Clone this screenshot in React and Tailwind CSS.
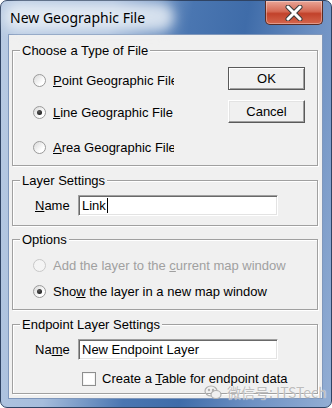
import React from 'react'

const body = { fontFamily: '"Liberation Sans", Arial, sans-serif' }

function Radio({ checked, disabled }) {
  return (
    <span
      className={`relative flex h-[13px] w-[13px] shrink-0 items-center justify-center rounded-full border ${
        disabled ? 'border-[#c8c8c8] bg-[#f4f4f4]' : 'border-[#9a9a9a] bg-[linear-gradient(135deg,#d8d8d8,#ffffff_70%)]'
      }`}
    >
      {checked && (
        <span className="h-[5px] w-[5px] rounded-full bg-[radial-gradient(circle_at_40%_35%,#5a5a5a,#0a0a0a)]" />
      )}
    </span>
  )
}

function Group({ title, className, children }) {
  return (
    <div
      className={`relative ml-[3px] w-[306px] border border-[#a0a0a0] shadow-[inset_1px_1px_0_#fff,1px_1px_0_#fff] ${className}`}
    >
      <span className="absolute left-[7px] top-[-8px] bg-[#f0f0f0] px-[2px] text-[13px] leading-[15px] text-black">
        {title}
      </span>
      {children}
    </div>
  )
}

function Button({ children, isDefault }) {
  return (
    <div
      className={`flex h-[23px] w-[77px] items-center justify-center bg-[#f0f0f0] text-[13px] text-black ${
        isDefault
          ? 'border border-[#5a5a5a] shadow-[inset_1px_1px_0_#fff,inset_-1px_-1px_0_#a0a0a0]'
          : 'border border-t-[#fff] border-l-[#fff] border-r-[#5a5a5a] border-b-[#5a5a5a] shadow-[inset_-1px_-1px_0_#a0a0a0,inset_1px_1px_0_#e3e3e3]'
      }`}
    >
      {children}
    </div>
  )
}

function TextBox({ value, cursor }) {
  return (
    <div className="flex h-[21px] w-[200px] items-center border border-t-[#a0a0a0] border-l-[#a0a0a0] border-r-[#fff] border-b-[#fff] bg-white pl-[3px] text-[13px] text-black shadow-[inset_1px_1px_0_#696969,inset_-1px_-1px_0_#e3e3e3]">
      <span className="leading-[15px]">{value}</span>
      {cursor && <span className="ml-[1px] h-[15px] w-[1px] bg-black" />}
    </div>
  )
}

export default function App() {
  return (
    <div
      className="relative flex h-[408px] w-[332px] flex-col rounded-[7px] border border-[#2f4363] bg-[linear-gradient(100deg,#b9cbe3_0%,#a6bddc_28%,#4a76b1_48%,#3f6ca9_62%,#6e91c3_80%,#93aed4_100%)] pb-[8px] pl-[7px] pr-[8px]"
      style={body}
    >
      {/* title bar */}
      <div className="relative flex h-[33px] items-start justify-between">
        <div className="absolute left-[-4px] top-[2px] h-[28px] w-[170px] rounded-full bg-[#eef2f8]/80 blur-[6px]" />
        <span
          className="relative ml-[2px] mt-[7px] text-[14px] leading-[19px] text-black"
          style={{ fontFamily: '"Noto Sans", "Open Sans", sans-serif' }}
        >
          New Geographic File
        </span>
        <div className="relative flex h-[24px] w-[58px] items-center justify-center rounded-b-[5px] border border-t-0 border-[#5b2b22] bg-[linear-gradient(#e9a597_0%,#d56a55_45%,#c2422b_55%,#d4654c_100%)] shadow-[inset_0_0_0_1px_rgba(255,255,255,0.35)]">
          <svg width="20" height="16" viewBox="0 0 20 16">
            <path d="M4 2 L16 14 M16 2 L4 14" stroke="#3c3c3c" strokeWidth="5" strokeLinecap="round" />
            <path d="M4 2 L16 14 M16 2 L4 14" stroke="#fff" strokeWidth="3" strokeLinecap="round" />
          </svg>
        </div>
      </div>

      {/* client area */}
      <div className="flex flex-1 flex-col border border-[#7f97bb] bg-[#f0f0f0]">
        <Group title="Choose a Type of File" className="mt-[15px] h-[116px]">
          <div className="flex">
            <div className="flex flex-col pl-[20px] pt-[21px] text-[13px] text-black">
              <div className="flex h-[16px] items-center gap-[7px]">
                <Radio />
                <span className="w-[121px] overflow-hidden whitespace-nowrap leading-[15px]">
                  <u>P</u>oint Geographic File
                </span>
              </div>
              <div className="mt-[16px] flex h-[16px] items-center gap-[7px]">
                <Radio checked />
                <span className="w-[121px] overflow-hidden whitespace-nowrap leading-[15px]">
                  <u>L</u>ine Geographic File
                </span>
              </div>
              <div className="mt-[19px] flex h-[16px] items-center gap-[7px]">
                <Radio />
                <span className="w-[121px] overflow-hidden whitespace-nowrap leading-[15px]">
                  <u>A</u>rea Geographic File
                </span>
              </div>
            </div>
            <div className="ml-auto flex flex-col gap-[10px] pr-[12px] pt-[16px]">
              <Button isDefault>OK</Button>
              <Button>Cancel</Button>
            </div>
          </div>
        </Group>

        <Group title="Layer Settings" className="mt-[14px] h-[46px]">
          <div className="flex items-center pl-[22px] pt-[14px] text-[13px] text-black">
            <span className="w-[43px]">
              <u>N</u>ame
            </span>
            <TextBox value="Link" cursor />
          </div>
        </Group>

        <Group title="Options" className="mt-[13px] h-[71px]">
          <div className="flex flex-col pl-[20px] pt-[17px] text-[13px]">
            <div className="flex h-[16px] items-center gap-[7px] text-[#a0a0a0]">
              <Radio disabled />
              <span className="whitespace-nowrap leading-[15px]">
                Add the layer to the <u>c</u>urrent map window
              </span>
            </div>
            <div className="mt-[10px] flex h-[16px] items-center gap-[7px] text-black">
              <Radio checked />
              <span className="whitespace-nowrap leading-[15px]">
                Sho<u>w</u> the layer in a new map window
              </span>
            </div>
          </div>
        </Group>

        <Group title="Endpoint Layer Settings" className="mt-[14px] h-[70px]">
          <div className="flex items-center pl-[22px] pt-[14px] text-[13px] text-black">
            <span className="w-[43px]">
              Na<u>m</u>e
            </span>
            <TextBox value="New Endpoint Layer" />
          </div>
          <div className="mt-[11px] flex items-center gap-[6px] pl-[69px] text-[13px] text-black">
            <span className="h-[14px] w-[14px] border border-[#8e8f8f] bg-white shadow-[inset_0_0_0_1px_#f4f4f4]" />
            <span className="leading-[15px]">
              Create a <u>T</u>able for endpoint data
            </span>
          </div>
        </Group>
      </div>

      {/* watermark */}
      <div className="pointer-events-none absolute left-[203px] top-[383px] flex items-center gap-[5px] text-[#b4b4b4]/90">
        <svg width="18" height="15" viewBox="0 0 18 15" fill="none" stroke="#b0b0b0" strokeWidth="1.2">
          <ellipse cx="7" cy="6" rx="6" ry="5" />
          <ellipse cx="12" cy="9.5" rx="5" ry="4" fill="#f0f0f0" />
          <circle cx="5" cy="5" r="0.6" fill="#b0b0b0" />
          <circle cx="9" cy="5" r="0.6" fill="#b0b0b0" />
        </svg>
        <span
          className="text-[14px] leading-[16px] [text-shadow:0_0_1px_#fff]"
          style={{ fontFamily: '"Noto Sans CJK SC", "Noto Sans", sans-serif' }}
        >
          微信号: ITSTech
        </span>
      </div>
    </div>
  )
}
